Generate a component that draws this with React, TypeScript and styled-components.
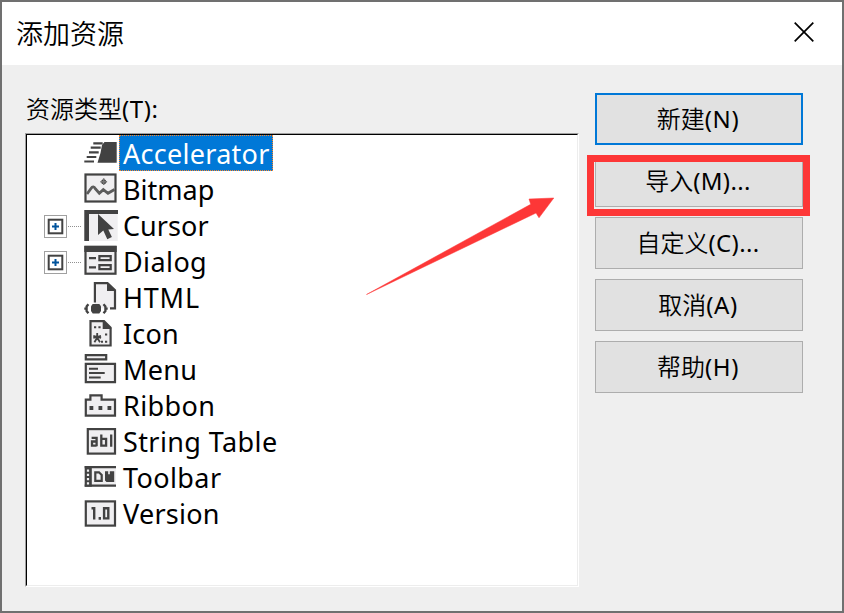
import React from "react";
import styled, { createGlobalStyle } from "styled-components";

const INK = "#424242";
const PAPER = "#f0eff1";

const GlobalStyle = createGlobalStyle`
  * { box-sizing: border-box; }
  body { margin: 0; background: #efefef; overflow: hidden; }
`;

const Frame = styled.div`
  position: relative;
  width: 844px;
  height: 613px;
  padding: 2px;
  display: flex;
  flex-direction: column;
  background: #707070;
  color: #000;
  font-family: "Noto Sans", "Noto Sans CJK SC", sans-serif;
`;

const TitleBar = styled.header`
  height: 63px;
  flex: none;
  display: flex;
  align-items: center;
  justify-content: space-between;
  padding: 0 28px 2px 14px;
  background: #fff;
`;

const Title = styled.h1`
  margin: 0;
  font: 350 27px/40px "Noto Sans CJK SC", sans-serif;
`;

const CloseButton = styled.button`
  width: 20px;
  height: 20px;
  margin-bottom: 1px;
  padding: 0;
  border: 0;
  background: none;
  svg { display: block; }
`;

const Body = styled.main`
  flex: 1;
  display: flex;
  gap: 16px;
  padding: 28px 39px 24px 23px;
  background: #efefef;
`;

const ListColumn = styled.section`
  width: 554px;
  display: flex;
  flex-direction: column;
`;

const ListLabel = styled.label`
  height: 40px;
  padding: 0 1px;
  font-size: 24px;
  font-weight: 350;
  line-height: 32px;
  white-space: nowrap;
`;

const Mnemonic = styled.span<{ $spacing?: number }>`
  font-weight: 400;
  letter-spacing: ${(p) => p.$spacing ?? 0.6}px;
`;

const TreeEdge = styled.div`
  height: 454px;
  border: 1px solid;
  border-color: #a0a0a0 #fff #fff #a0a0a0;
`;

const Tree = styled.ul`
  height: 100%;
  margin: 0;
  padding: 0;
  list-style: none;
  background: #fff;
  border: 1px solid;
  border-color: #000 #ededed #ededed #000;
`;

const Row = styled.li`
  height: 36px;
  display: flex;
`;

const ExpandSlot = styled.span`
  width: 55px;
  padding-left: 17px;
  flex: none;
  svg { display: block; }
`;

const IconSlot = styled.span`
  width: 37px;
  flex: none;
  svg { display: block; }
`;

const RowLabel = styled.span<{ $selected?: boolean; $spacing: number; $width: number }>`
  height: 36px;
  width: ${(p) => p.$width + 8}px;
  padding-left: 4px;
  font: 27px/37px "Noto Sans", sans-serif;
  letter-spacing: ${(p) => p.$spacing}px;
  white-space: nowrap;
  color: ${(p) => (p.$selected ? "#fff" : "#000")};
  background: ${(p) => (p.$selected ? "#0078d7" : "transparent")};
  outline: ${(p) => (p.$selected ? "1px dotted #ff8728" : "none")};
  outline-offset: -1px;
`;

const Actions = styled.div`
  display: flex;
  flex-direction: column;
  gap: 10px;
`;

const ActionItem = styled.div`
  position: relative;
`;

const ActionButton = styled.button<{ $primary?: boolean }>`
  display: block;
  width: 208px;
  height: 52px;
  padding: 0 2px 0 0;
  border: ${(p) => (p.$primary ? "2px solid #0078d7" : "1px solid #adadad")};
  background: #e1e1e1;
  color: #000;
  font: 350 24px/36px "Noto Sans", "Noto Sans CJK SC", sans-serif;
`;

const Highlight = styled.span`
  position: absolute;
  left: -8px;
  top: 0;
  width: 223px;
  height: 61px;
  border: 7px solid #fd3737;
  z-index: 1;
  pointer-events: none;
`;

const ArrowOverlay = styled.svg`
  position: absolute;
  left: 364px;
  top: 194px;
  pointer-events: none;
`;

const Glyph = ({ children }: { children: React.ReactNode }) => (
  <svg width="37" height="36" viewBox="0 0 37 36" fill="none" stroke={INK} strokeWidth="2.2">
    {children}
  </svg>
);

const icons: Record<string, React.ReactNode> = {
  accelerator: (
    <>
      <path d="M11.3 8.3h9.4M8.7 12.7h10M7 17.3h9.7M4.7 22h9.6M2.3 26.5h9.7" strokeWidth="2.2" />
      <path d="M22.5 7H34.7V27.8H15.5L18.5 18L20 10Z" fill={INK} stroke="none" />
    </>
  ),
  bitmap: (
    <>
      <rect x="3.5" y="3.5" width="30" height="27" fill={PAPER} />
      <circle cx="21.7" cy="10.7" r="2.5" fill={INK} stroke="none" />
      <path d="M21.7 7.3v6.8M18.3 10.7h6.8" strokeWidth="1.5" stroke="#777" />
      <path d="M5 23L9 17.5Q11.3 14 13.5 18L17.3 22.3L21.3 18.6L26 22.3L32.5 18.5" strokeWidth="2.8" stroke="#5c5c5c" />
    </>
  ),
  cursor: (
    <>
      <path d="M2.3 3H35.7V34H2.3Z" fill={PAPER} stroke="none" />
      <path d="M2.3 3H36V7H7V34H2.3Z" fill={INK} stroke="none" />
      <path d="M16 7V28L21.3 23.6L25.3 32.3L29.9 30L26.3 22.6L32 21.9Z" fill={INK} stroke="none" />
    </>
  ),
  dialog: (
    <>
      <rect x="3.5" y="4" width="30" height="26.7" fill={PAPER} />
      <path d="M2.3 2.7H34.7V9H2.3Z" fill={INK} stroke="none" />
      <path d="M7 15.2h7M7 24.3h7M17.4 13.1h11.3v4H17.4ZM17.4 22.1h11.3v4H17.4Z" />
    </>
  ),
  html: (
    <>
      <path d="M12.7 4.1H25.8L33 11V29.3H12.7Z" fill={PAPER} stroke="none" />
      <path d="M12.9 23.5V4.1H25.5L33 11.3V29.4H28" />
      <path d="M25 3V12H34Z" fill={INK} stroke="none" />
      <path d="M10.7 25H17.3L19 27.3V32L17.3 34.4H10.7L9 32V27.3Z" fill={INK} stroke="none" />
      <path d="M6.4 25.3L4.6 27.4V32L6.4 34.2M21.5 25.3L23.4 27.4V32L21.5 34.2M4.6 29.7H2.3M23.4 29.7H25.7" strokeWidth="2.3" />
    </>
  ),
  icon: (
    <>
      <path d="M8.5 6.2H22L28.6 12.8V30.5H8.5Z" fill={PAPER} />
      <path d="M20.7 5V14H29.7Z" fill={INK} stroke="none" />
      <path d="M12 12.3h2.2M16.4 12.3h2.2M23 19.5h2.2M23 26.7h2.2M19 26.7h2" strokeWidth="1.9" />
      <path d="M15.2 17.9v7M11.3 20.8l7.8 2.2M19 20.8l-7.7 2.2M12.4 27.2l2.8-4.5 2.8 4.5" strokeWidth="1.8" />
    </>
  ),
  menu: (
    <>
      <path d="M3.8 4.1H24.2V8.4H3.8ZM3.8 12.8H33V31.2H3.8Z" fill={PAPER} />
      <path d="M7 17.7h9M7 22.1h15.7M7 26.5h11.7" strokeWidth="2" />
    </>
  ),
  ribbon: (
    <>
      <path d="M3.8 12.7H8.4V8.4H19.6V12.7H33V28.6H3.8Z" fill={PAPER} />
      <path d="M7.5 21h3.8M16.5 21h3.8M25.5 21h3.8" strokeWidth="4" />
    </>
  ),
  string: (
    <>
      <rect x="5.8" y="6.1" width="27.2" height="24.5" fill={PAPER} />
      <path d="M9.6 14.8h5v8.4M14.6 18.5H10v4.2h4.6M19.3 11.5v11.2h4.8v-6.9h-4.8M29.2 11.5v12.2" strokeWidth="2.3" />
    </>
  ),
  toolbar: (
    <>
      <path d="M2.7 7H34V27.7H2.7Z" fill={PAPER} stroke="none" />
      <path d="M2.7 8.1H34M2.7 26.7H34" />
      <path d="M2.7 7H9.8V27.7H2.7Z" fill={INK} stroke="none" />
      <path d="M6 10.6v2.2M6 14.8v2.2M6 19v2.2M6 23.2v2.2" stroke={PAPER} strokeWidth="2.2" />
      <path d="M13.3 13.3h3.7l2.7 2.7v5.8h-6.4Z" />
      <path d="M23 12.3h3.2v3h1.6v-3h4.4V23H24.5L23 21.5Z" fill={INK} stroke="none" />
    </>
  ),
  version: (
    <>
      <rect x="3.8" y="6.4" width="29.2" height="24.2" fill={PAPER} />
      <path d="M9.5 13.2h2.7v11.3M17.8 22.1v2.6M22.1 13.2h4.2v10.2h-4.2Z" strokeWidth="2.4" />
    </>
  ),
};

const Expander = () => (
  <svg width="38" height="36" viewBox="0 0 38 36" fill="none">
    <rect x="0.5" y="8.5" width="22" height="22" fill="#fff" stroke="#a0a0a0" />
    <rect x="4.7" y="12.7" width="13.6" height="13.6" fill="#fff" stroke={INK} strokeWidth="2" />
    <path d="M8 19.5h7M11.5 16v7" stroke="#00539c" strokeWidth="2" />
    <path d="M24 19.5h13" stroke="#909090" strokeDasharray="1 1" />
  </svg>
);

type Resource = {
  name: string;
  icon: string;
  width: number;
  spacing: number;
  expandable?: boolean;
  selected?: boolean;
};

const resources: Resource[] = [
  { name: "Accelerator", icon: "accelerator", width: 146, spacing: 0.28, selected: true },
  { name: "Bitmap", icon: "bitmap", width: 90, spacing: 0 },
  { name: "Cursor", icon: "cursor", width: 84, spacing: 0.05, expandable: true },
  { name: "Dialog", icon: "dialog", width: 83, spacing: 0.4, expandable: true },
  { name: "HTML", icon: "html", width: 75, spacing: 0.8 },
  { name: "Icon", icon: "icon", width: 54, spacing: 0.2 },
  { name: "Menu", icon: "menu", width: 73, spacing: 0.3 },
  { name: "Ribbon", icon: "ribbon", width: 91, spacing: 0.4 },
  { name: "String Table", icon: "string", width: 153, spacing: 0.4 },
  { name: "Toolbar", icon: "toolbar", width: 98, spacing: 0.4 },
  { name: "Version", icon: "version", width: 95, spacing: 0.25 },
];

const actions = [
  { label: "新建", mnemonic: "(N)", primary: true },
  { label: "导入", mnemonic: "(M)...", spacing: 0.35, highlighted: true },
  { label: "自定义", mnemonic: "(C)...", spacing: 0.35 },
  { label: "取消", mnemonic: "(A)" },
  { label: "帮助", mnemonic: "(H)" },
];

export default function App() {
  return (
    <Frame>
      <GlobalStyle />
      <TitleBar>
        <Title>添加资源</Title>
        <CloseButton aria-label="关闭">
          <svg width="20" height="20" viewBox="0 0 20 20">
            <path d="M0.7 0.7L19.3 19.3M19.3 0.7L0.7 19.3" stroke="#000" strokeWidth="1.7" />
          </svg>
        </CloseButton>
      </TitleBar>
      <Body>
        <ListColumn>
          <ListLabel>
            资源类型<Mnemonic>(T):</Mnemonic>
          </ListLabel>
          <TreeEdge>
            <Tree>
              {resources.map((r) => (
                <Row key={r.name}>
                  <ExpandSlot>{r.expandable && <Expander />}</ExpandSlot>
                  <IconSlot>
                    <Glyph>{icons[r.icon]}</Glyph>
                  </IconSlot>
                  <RowLabel $selected={r.selected} $spacing={r.spacing} $width={r.width}>
                    {r.name}
                  </RowLabel>
                </Row>
              ))}
            </Tree>
          </TreeEdge>
        </ListColumn>
        <Actions>
          {actions.map((a) => (
            <ActionItem key={a.label}>
              <ActionButton $primary={a.primary}>
                {a.label}
                <Mnemonic $spacing={a.spacing}>{a.mnemonic}</Mnemonic>
              </ActionButton>
              {a.highlighted && <Highlight />}
            </ActionItem>
          ))}
        </Actions>
      </Body>
      <ArrowOverlay width="194" height="104" viewBox="364 194 194 104">
        <path d="M366.5 294.5L530.7 204.3L529 199L553.8 198L539 217.8L536 213Z" fill="#fd3737" stroke="#fd3737" strokeWidth="0.5" />
      </ArrowOverlay>
    </Frame>
  );
}
